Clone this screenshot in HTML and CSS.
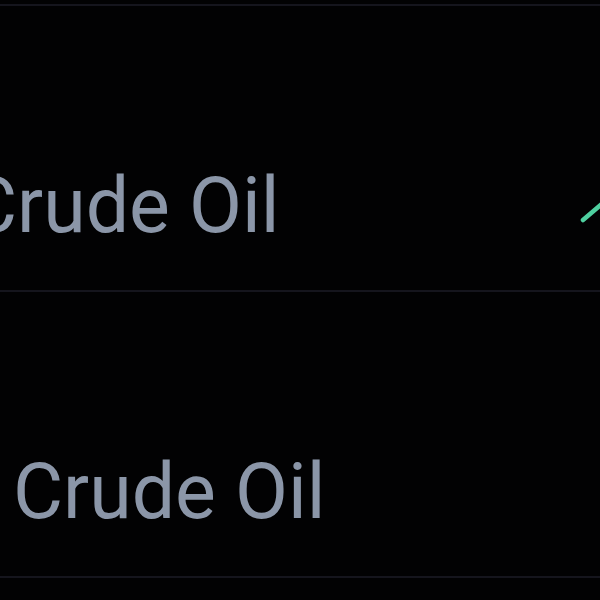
FILE: index.html
```html
<!DOCTYPE html>
<html>
<head>
    <title>Markets</title>
    <meta charset="utf-8" />
    <link rel="stylesheet" href="styles.css">
</head>
<body>
    <div id="list">
        <div class="row row-shifted">
            <span class="name">Crude Oil</span>
            <svg class="spark" width="20" height="40" viewBox="0 0 20 40">
                <polyline points="3,30 24,12" />
            </svg>
        </div>
        <div class="row">
            <span class="name">Crude Oil</span>
        </div>
        <div class="row row-last"></div>
    </div>
</body>
</html>
```
FILE: styles.css
```css
html, body { margin:0; padding:0; background:#020203; overflow:hidden; }
body { width:600px; height:600px; font-family:"Roboto", "Inter", sans-serif; }
#list { padding-top:4px; }
.row { height:284px; border-top:2px solid #15151d; display:flex; align-items:flex-start; justify-content:space-between; }
.row-last { height:20px; }
.name { display:block; margin-top:154px; margin-left:13px; font-size:77px; line-height:92px; color:#8b96a8; white-space:nowrap; }
.row-shifted .name { margin-left:-33px; }
.spark { margin-top:184px; overflow:visible; }
.spark polyline { fill:none; stroke:#4fd0a0; stroke-width:4.5; stroke-linecap:round; }
```
